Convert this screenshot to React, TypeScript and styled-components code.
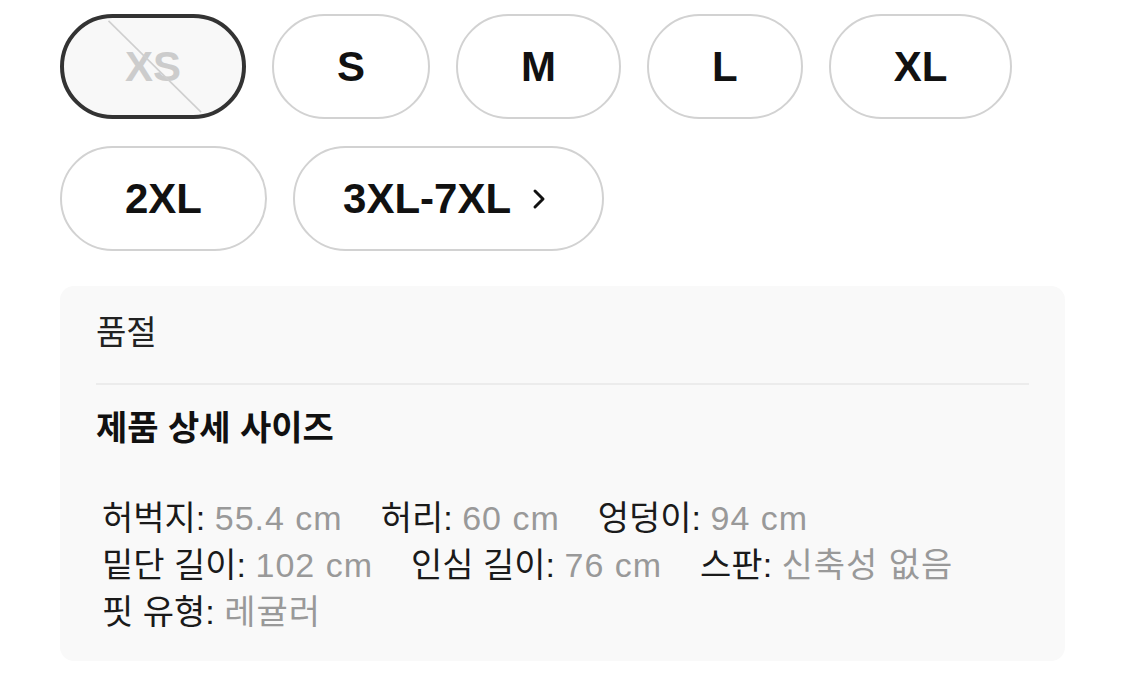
import React from 'react';
import styled, { createGlobalStyle } from 'styled-components';

const GlobalStyle = createGlobalStyle`
    html, body {
        margin: 0;
        padding: 0;
        background: #ffffff;
    }
    body {
        font-family: 'Liberation Sans', 'Noto Sans CJK KR', sans-serif;
        color: #111111;
    }
`;

type Size = { label: string; soldOut?: boolean; selected?: boolean; more?: boolean };

const SIZES: Size[] = [
    { label: 'XS', soldOut: true, selected: true },
    { label: 'S' },
    { label: 'M' },
    { label: 'L' },
    { label: 'XL' },
    { label: '2XL' },
    { label: '3XL-7XL', more: true },
];

const SPECS: [string, string][][] = [
    [
        ['허벅지', '55.4 cm'],
        ['허리', '60 cm'],
        ['엉덩이', '94 cm'],
    ],
    [
        ['밑단 길이', '102 cm'],
        ['인심 길이', '76 cm'],
        ['스판', '신축성 없음'],
    ],
    [['핏 유형', '레귤러']],
];

export default (() => {
    return (
        <Page>
            <GlobalStyle />
            <SizeGrid>
                {SIZES.map((s) => (
                    <SizePill key={s.label} $selected={s.selected} $soldOut={s.soldOut} $more={s.more}>
                        {s.label}
                        {s.more && (
                            <svg width="16" height="24" viewBox="0 0 16 24">
                                <path d="M4 4l8 8-8 8" fill="none" stroke="#111" strokeWidth="3" strokeLinecap="round" strokeLinejoin="round" />
                            </svg>
                        )}
                        {s.soldOut && (
                            <Strike viewBox="0 0 100 100" preserveAspectRatio="none">
                                <line x1="25" y1="3" x2="77" y2="97" stroke="#cfcfcf" strokeWidth="1.6" vectorEffect="non-scaling-stroke" />
                            </Strike>
                        )}
                    </SizePill>
                ))}
            </SizeGrid>
            <Panel>
                <Status>품절</Status>
                <PanelTitle>제품 상세 사이즈</PanelTitle>
                <SpecList>
                    {SPECS.map((row, i) => (
                        <SpecRow key={i}>
                            {row.map(([k, v]) => (
                                <SpecItem key={k}>
                                    <SpecKey>{k}:</SpecKey> <SpecValue>{v}</SpecValue>
                                </SpecItem>
                            ))}
                        </SpecRow>
                    ))}
                </SpecList>
            </Panel>
        </Page>
    );
}) as React.FC;

const Page = styled.div`
    padding: 14px 60px 0 60px;
`;

const SizeGrid = styled.div`
    display: flex;
    flex-wrap: wrap;
    column-gap: 26px;
    row-gap: 27px;
`;

const SizePill = styled.button<{ $selected?: boolean; $soldOut?: boolean; $more?: boolean }>`
    position: relative;
    box-sizing: border-box;
    height: 105px;
    display: inline-flex;
    align-items: center;
    justify-content: center;
    gap: 20px;
    padding: ${(p) => (p.$more ? '0 55px 0 48px' : p.$selected ? '0 61px' : '0 63px')};
    border: ${(p) => (p.$selected ? '4px solid #333333' : '2px solid #d2d2d2')};
    border-radius: 999px;
    background: ${(p) => (p.$soldOut ? '#f8f8f8' : '#ffffff')};
    color: ${(p) => (p.$soldOut ? '#cccccc' : '#111111')};
    font-family: 'Liberation Sans', sans-serif;
    font-weight: 700;
    font-size: 42px;
    overflow: hidden;
    cursor: pointer;
`;

const Strike = styled.svg`
    position: absolute;
    inset: 0;
    width: 100%;
    height: 100%;
    pointer-events: none;
`;

const Panel = styled.div`
    margin-top: 35px;
    background: #f9f9f9;
    border-radius: 14px;
    padding: 24px 36px 25px 36px;
`;

const Status = styled.div`
    font-size: 33px;
    line-height: 46px;
    color: #222222;
    padding-bottom: 27px;
    border-bottom: 2px solid #ececec;
`;

const PanelTitle = styled.div`
    margin-top: 20px;
    font-size: 34px;
    line-height: 46px;
    font-weight: 700;
    color: #111111;
`;

const SpecList = styled.div`
    margin-top: 44px;
    padding-left: 6px;
    display: flex;
    flex-direction: column;
`;

const SpecRow = styled.div`
    display: flex;
    gap: 38px;
    font-size: 34px;
    line-height: 47px;
`;

const SpecItem = styled.span`
    white-space: nowrap;
`;

const SpecKey = styled.span`
    color: #1a1a1a;
`;

const SpecValue = styled.span`
    color: #999999;
    letter-spacing: 1px;
`;
